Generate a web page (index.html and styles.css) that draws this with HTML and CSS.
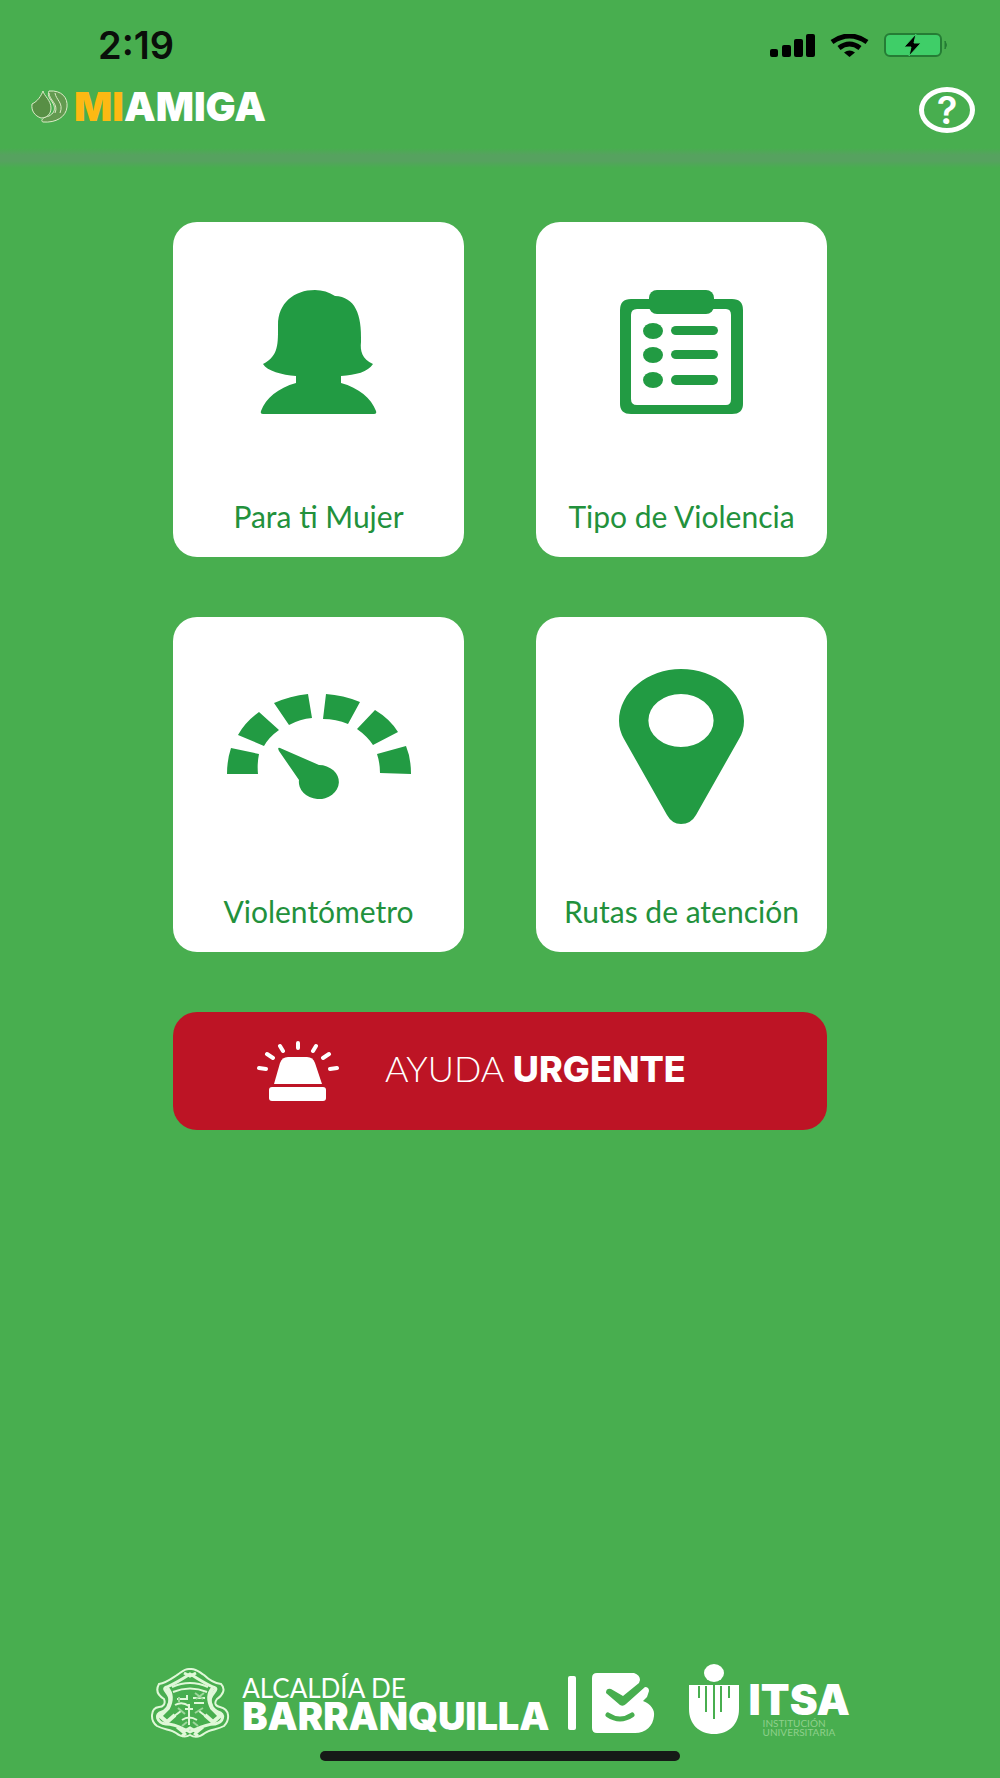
FILE: index.html
```html
<!DOCTYPE html>
<html lang="es">
<head>
    <meta charset="UTF-8">
    <meta name="viewport" content="width=device-width, initial-scale=1.0">
    <title>MI AMIGA</title>
    <link rel="stylesheet" href="styles.css">
</head>
<body>
    <div class="status-bar">
        <span class="time">2:19</span>
        <div class="status-icons">
            <svg class="signal" width="45" height="23" viewBox="0 0 45 23" aria-hidden="true">
                <rect x="0" y="15" width="8" height="8" rx="2"/>
                <rect x="12" y="11" width="9" height="12" rx="2"/>
                <rect x="24" y="5" width="9" height="18" rx="2"/>
                <rect x="36" y="0" width="9" height="23" rx="2"/>
            </svg>
            <svg class="wifi" width="39" height="23" viewBox="0 0 39 23" aria-hidden="true">
                <path d="M2 8Q19.500 -4 37 8" fill="none" stroke="#000" stroke-width="5"/>
                <path d="M9 14Q19.500 6 30 14" fill="none" stroke="#000" stroke-width="5"/>
                <path d="M14 18.500Q19.500 14.500 25 18.500L19.500 23Z"/>
            </svg>
            <svg class="battery" width="64" height="24" viewBox="0 0 64 24" aria-hidden="true">
                <rect x="1" y="1" width="56" height="22" rx="5" fill="#3fce68" stroke="#257d35" stroke-width="2"/>
                <path d="M61 8Q64 12 61 16Z" fill="#257d35" stroke="#257d35"/>
                <path d="M32 1L20 14H27L25 23L37 10H30Z" fill="#000" stroke="#3fce68" stroke-width="1"/>
            </svg>
        </div>
    </div>

    <header class="header">
        <div class="brand">
            <svg width="37" height="34" viewBox="0 0 37 34" aria-hidden="true">
                <path d="M18 1C31 0 37 8 36 17C35 27 25 33 12 32C9 31 12 27 18 26C27 21 23 14 19 9C17 6 17 3 18 1Z" fill="#639a50" stroke="#dcebc7" stroke-width="1"/>
                <path d="M12 1C13 6 20 10 20 18C20 24 16 28 10 28C4 26 0 21 1 14C7 11 10 6 12 1Z" fill="#588f45" stroke="#dcebc7" stroke-width="1"/>
                <path d="M18 3C18 10 28 14 24 23M24 3C25 10 33 13 29 23" fill="none" stroke="#dcebc7" stroke-width="1"/>
            </svg>
            <h1><span class="mi">MI</span>AMIGA</h1>
        </div>
        <button class="help" type="button" aria-label="Ayuda">?</button>
    </header>
    <div class="header-line"></div>

    <main class="menu">
        <nav class="cards">
            <a class="card" href="#mujer">
                <span class="card-icon">
                    <svg width="118" height="124" viewBox="0 0 118 124" aria-hidden="true">
                        <path d="M55 0C34 0 18 13 18 35C18 53 19 66 3 74C7 81 22 85 36 86V93C18 98 6 108 1 121Q0 124 3 124H114Q117 124 116 121C111 108 99 98 81 93V86C96 85 108 82 113 74C102 69 100 61 101 52C102 24 95 7 75 6Q66 0 55 0Z"/>
                    </svg>
                </span>
                <span class="card-label">Para ti Mujer</span>
            </a>
            <a class="card" href="#violencia">
                <span class="card-icon">
                    <svg width="123" height="124" viewBox="0 0 123 124" aria-hidden="true">
                        <path fill-rule="evenodd" d="M11 9H112Q123 9 123 20V114Q123 124 112 124H11Q0 124 0 114V20Q0 9 11 9ZM17 19Q11 19 11 25V109Q11 115 17 115H106Q111 115 111 109V25Q111 19 106 19Z"/>
                        <rect x="29" y="0" width="65" height="24" rx="8"/>
                        <ellipse cx="33" cy="41" rx="10" ry="8"/>
                        <ellipse cx="33" cy="65" rx="10" ry="8"/>
                        <ellipse cx="33" cy="90" rx="10" ry="8"/>
                        <rect x="51" y="36" width="47" height="9" rx="5"/>
                        <rect x="51" y="60" width="47" height="9" rx="5"/>
                        <rect x="51" y="85" width="47" height="10" rx="5"/>
                    </svg>
                </span>
                <span class="card-label">Tipo de Violencia</span>
            </a>
            <a class="card" href="#violentometro">
                <span class="card-icon">
                    <svg width="184" height="106" viewBox="0 0 184 106" aria-hidden="true">
                        <path d="M4 54L32 60Q30 70 31 80H0Q0 66 4 54Z"/>
                        <path d="M32 18L52 36Q42 43 37 52L11 41Q18 28 32 18Z"/>
                        <path d="M47 9Q63 2 81 0L85 24Q73 25 62 31Z"/>
                        <path d="M99 0Q116 1 133 8L121 30Q109 25 96 25Z"/>
                        <path d="M148 16Q163 25 171 38L146 51Q140 42 130 35Z"/>
                        <path d="M179 52Q184 64 184 80L153 79Q153 69 150 60Z"/>
                        <path d="M53 54Q50 53 52 57L72 86A20 17 0 1 0 92 71Z"/>
                    </svg>
                </span>
                <span class="card-label">Violentómetro</span>
            </a>
            <a class="card" href="#rutas">
                <span class="card-icon">
                    <svg width="125" height="155" viewBox="0 0 125 155" aria-hidden="true">
                        <path fill-rule="evenodd" d="M62 0C96 0 125 23 125 52Q125 62 120 70L77 146Q72 155 62 155Q53 155 48 146L5 70Q0 61 0 52C0 23 29 0 62 0ZM62 25A32 26 0 1 0 62 78A32 26 0 1 0 62 25Z"/>
                    </svg>
                </span>
                <span class="card-label">Rutas de atención</span>
            </a>
        </nav>

        <button class="urgent" type="button">
            <svg width="82" height="60" viewBox="0 0 82 60" aria-hidden="true">
                <rect x="12" y="46" width="57" height="14" rx="3"/>
                <path d="M17 43L23 22Q25 16 31 16H50Q56 16 58 22L65 43Z"/>
                <path d="M41 2V7M23 5L26 10M59 5L56 10M10 13L16 17M72 13L66 17M2 27L9 28M80 27L73 28" fill="none" stroke="#fff" stroke-width="4" stroke-linecap="round"/>
            </svg>
            <span>AYUDA <strong>URGENTE</strong></span>
        </button>
    </main>

    <footer class="footer">
        <div class="logos">
            <!-- escudo de la alcaldía -->
            <svg class="crest" width="80" height="72" viewBox="0 0 80 72" aria-hidden="true" fill="none" stroke="#e0f8d8">
                <path d="M40 2C34 1 31 6 27 8C21 12 16 16 9 17C5 24 9 29 14 32C16 37 13 40 9 40C0 41 0 54 7 59C14 63 21 62 26 66C31 70 35 71 40 68C45 71 50 70 55 66C60 62 67 63 74 59C80 53 80 42 70 40C65 39 64 36 67 32C73 28 76 22 71 17C64 16 59 13 54 8C49 5 46 1 40 2Z" stroke-width="2"/>
                <path d="M40 7C34 11 26 16 17 20C10 22 21 26 20 34C19 42 16 44 12 45C4 47 7 56 16 57C26 57 31 61 40 65C49 61 55 57 65 57C74 55 75 47 68 45C61 43 60 38 60 34C60 26 71 22 63 20C54 16 47 11 40 7Z" stroke-width="3"/>
                <path d="M17 21Q24 29 18 41L10 49L17 55L25 48M63 21Q56 29 62 41L70 49L63 55L55 48" stroke-width="4"/>
                <path d="M22 20Q40 12 58 20M23 25Q40 18 57 25M27 32H37V28M25 38Q32 34 39 39M43 31H55M44 36H54M31 44L23 50M49 44L58 51M39 37V58M35 42H43M32 53Q39 48 47 53" stroke-width="2"/>
                <path d="M45 26L53 32M46 32L54 26M29 30V35M28 41L35 47M45 46L53 41M37 55L32 59M43 55L48 59" stroke="#9ed79b" stroke-width="2"/>
                <path d="M34 6L40 9L46 6M27 60L33 65L40 61L47 65L53 60M32 69L36 66M48 69L44 66" stroke-width="3"/>
            </svg>
            <div class="city">
                <span class="city-top">ALCALDÍA DE</span>
                <span class="city-name">BARRANQUILLA</span>
            </div>
            <span class="divider"></span>
            <svg class="b-logo" width="63" height="60" viewBox="0 0 63 60" aria-hidden="true">
                <path d="M5 0H42Q48 2 48 7L47 10L31 23L19 16Q14 15 14 20L28 32Q31 34 34 31L53 14Q57 14 57 18L55 24L51 28C59 31 63 37 62 43C61 53 54 60 43 60H5Q0 60 0 55V5Q0 0 5 0Z" fill="#fff"/>
                <path d="M16 42Q28 50 40 42" fill="none" stroke="#48ae4f" stroke-width="5" stroke-linecap="round"/>
            </svg>
            <svg class="itsa-logo" width="50" height="70" viewBox="0 0 50 70" aria-hidden="true">
                <ellipse cx="25" cy="9" rx="10" ry="9" fill="#fff"/>
                <path d="M0 21H50V45C50 60 40 70 25 70C10 70 0 60 0 45Z" fill="#fff"/>
                <path d="M10 22V34M17 22V48M25 20V55M32 22V48M40 22V34" fill="none" stroke="#48ae4f" stroke-width="2"/>
            </svg>
            <div class="itsa">
                <span class="itsa-name">ITSA</span>
                <span class="itsa-sub">INSTITUCIÓN<br>UNIVERSITARIA</span>
            </div>
        </div>
        <div class="home-bar"></div>
    </footer>
</body>
</html>
```
FILE: styles.css
```css
* {
    box-sizing: border-box;
}

body {
    margin: 0;
    min-height: 100vh;
    display: flex;
    flex-direction: column;
    background: #48ae4f;
    color: #fff;
    font-family: Lato, sans-serif;
}

/* barra de estado */
.status-bar {
    display: flex;
    justify-content: space-between;
    align-items: center;
    height: 68px;
    padding: 22px 52px 0 98px;
}

.time {
    color: #0a0f0a;
    font-family: Inter, sans-serif;
    font-size: 38px;
    line-height: 40px;
    font-weight: 600;
}

.status-icons {
    display: flex;
    align-items: center;
    gap: 15px;
}

/* encabezado */
.header {
    display: flex;
    justify-content: space-between;
    align-items: center;
    height: 80px;
    padding: 4px 25px 0 31px;
}

.header-line {
    height: 20px;
    background: linear-gradient(#48ae4f, #56a25f 35%, #56a25f 65%, #48ae4f);
}

.brand {
    display: flex;
    align-items: center;
    gap: 6px;
    padding-bottom: 7px;
}

h1 {
    margin: 0;
    font-family: Inter, sans-serif;
    font-size: 40px;
    line-height: 40px;
    font-weight: 900;
}

.mi {
    color: #fdb913;
}

.help {
    width: 56px;
    height: 46px;
    padding: 0;
    border: 5px solid #fff;
    border-radius: 50%;
    background: none;
    color: #fff;
    font-family: Inter, sans-serif;
    font-size: 38px;
    line-height: 36px;
    font-weight: 600;
    cursor: pointer;
}

/* menú principal */
.menu {
    width: 100%;
    max-width: 654px;
    margin: 0 auto;
    padding: 54px 0;
}

.cards {
    display: grid;
    grid-template-columns: 1fr 1fr;
    gap: 60px 72px;
}

.card {
    display: flex;
    flex-direction: column;
    align-items: center;
    padding-bottom: 23px;
    border-radius: 24px;
    background: #fff;
    color: #22913c;
    text-decoration: none;
}

.card-icon {
    display: flex;
    align-items: center;
    height: 259px;
    margin-bottom: 17px;
    fill: #229b43;
}

.card-label {
    font-size: 30px;
    line-height: 36px;
}

.urgent {
    display: flex;
    align-items: center;
    gap: 46px;
    width: 100%;
    height: 118px;
    margin-top: 60px;
    padding: 0 84px;
    border: 0;
    border-radius: 24px;
    background: #bd1425;
    color: #fff;
    fill: #fff;
    font-family: Lato, sans-serif;
    font-size: 36px;
    font-weight: 300;
    cursor: pointer;
}

.urgent span {
    padding-bottom: 6px;
}

.urgent strong {
    font-family: Inter, sans-serif;
    font-weight: 800;
}

/* pie de página */
.footer {
    display: flex;
    flex-direction: column;
    align-items: center;
    gap: 9px;
    margin-top: auto;
    padding-bottom: 17px;
}

.logos {
    display: flex;
    align-items: center;
    height: 78px;
}

.city {
    display: flex;
    flex-direction: column;
    margin-left: 12px;
    padding-top: 2px;
}

.city-top {
    font-size: 26px;
    line-height: 24px;
}

.city-name {
    font-family: Inter, sans-serif;
    font-size: 38px;
    line-height: 32px;
    font-weight: 900;
}

.divider {
    width: 8px;
    height: 54px;
    margin: 0 16px 0 18px;
    border-radius: 2px;
    background: #fff;
}

.itsa-logo {
    margin: 0 10px 8px 34px;
}

.itsa {
    display: flex;
    flex-direction: column;
    padding-top: 12px;
}

.itsa-name {
    font-family: Inter, sans-serif;
    font-size: 42px;
    line-height: 38px;
    font-weight: 900;
}

.itsa-sub {
    padding-left: 14px;
    color: #8fd08c;
    font-size: 10px;
    line-height: 9px;
}

.home-bar {
    width: 36%;
    height: 10px;
    border-radius: 5px;
    background: #161a17;
}
```
